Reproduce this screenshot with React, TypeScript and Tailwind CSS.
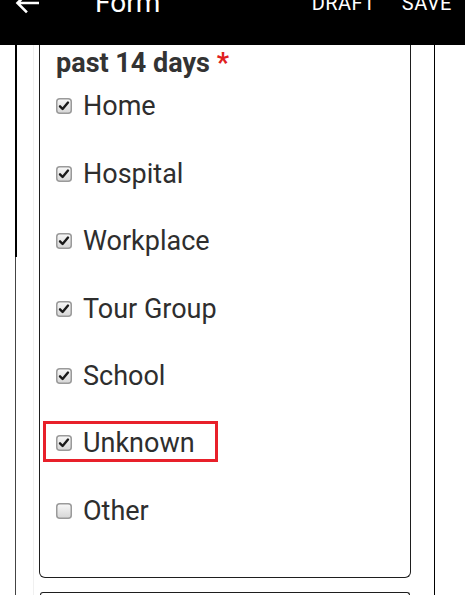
import React from "react";

function Check({ checked }: { checked: boolean }) {
  return (
    <svg width="16" height="16" viewBox="0 0 16 16" className="shrink-0">
      <defs>
        <linearGradient id="cbg" x1="0" y1="0" x2="0" y2="1">
          <stop offset="0" stopColor="#f8f8f8" />
          <stop offset="1" stopColor="#d6d6d6" />
        </linearGradient>
      </defs>
      <rect x="0.75" y="0.75" width="14.5" height="14.5" rx="3" fill="url(#cbg)" stroke="#9a9a9a" strokeWidth="1.5" />
      {checked && (
        <path d="M4 8.3 L6.6 11 L12 4.6" fill="none" stroke="#1a1a1a" strokeWidth="2.4" strokeLinecap="round" strokeLinejoin="round" />
      )}
    </svg>
  );
}

const items = ["Home", "Hospital", "Workplace", "Tour Group", "School", "Unknown", "Other"];

export default function App() {
  return (
    <div className="w-[465px] h-[595px] overflow-hidden bg-white" style={{ fontFamily: "Roboto, 'Liberation Sans', sans-serif" }}>
      <div className="h-[45px] bg-black overflow-hidden">
        <div className="-mt-[11px] h-[28px] flex items-center text-white">
          <div className="w-[15px]" />
          <svg width="24" height="22" viewBox="0 0 24 22" className="shrink-0">
            <path d="M23 11 H3 M11 2.5 L2.5 11 L11 19.5" fill="none" stroke="#fff" strokeWidth="2.6" strokeLinecap="square" />
          </svg>
          <div className="w-[56px]" />
          <span className="text-[28px] leading-none">Form</span>
          <div className="flex-1" />
          <span className="text-[20px] leading-none tracking-[0.5px]">DRAFT</span>
          <div className="w-[26px]" />
          <span className="text-[20px] leading-none tracking-[0.5px]">SAVE</span>
          <div className="w-[13px]" />
        </div>
      </div>
      <div className="flex h-[550px]">
        <div className="w-[15px]" />
        <div className="w-[2px] flex flex-col">
          <div className="h-[212px] bg-black" />
          <div className="flex-1 w-[1px] bg-[#444]" />
        </div>
        <div className="w-[16px]" />
        <div className="w-[1px] bg-[#f0f0f0]" />
        <div className="w-[5px]" />
        <div className="w-[372px] flex flex-col">
          <div className="h-[533px] border-x border-b border-[#1e1e1e] rounded-b-[6px] pl-[16px] pt-[2px]">
            <div className="text-[27px] leading-[32px] font-bold text-[#333]">
              past 14 days <span className="text-[#e02020]">*</span>
            </div>
            <div className="mt-[12px] flex flex-col gap-[37.5px]">
              {items.map((it, i) =>
                it === "Unknown" ? (
                  <div
                    key={it}
                    className="-ml-[13px] pl-[10px] w-[175px] h-[41px] -mt-[8px] -mb-[3px] flex items-center gap-[11px] border-[3px] border-[#e8202a] text-[27px] text-[#2e2e2e] pt-[3px]"
                  >
                    <Check checked={true} />
                    <span className="leading-[30px]">{it}</span>
                  </div>
                ) : (
                  <div key={it} className="h-[30px] flex items-center gap-[11px] text-[27px] text-[#2e2e2e]">
                    <Check checked={i < 6} />
                    <span className="leading-[30px]">{it}</span>
                  </div>
                )
              )}
            </div>
          </div>
          <div className="h-[14px]" />
          <div className="flex-1 mx-[1px] border-x border-t border-[#1e1e1e] rounded-t-[6px]" />
        </div>
        <div className="w-[23px]" />
        <div className="w-[1px] bg-black" />
      </div>
    </div>
  );
}
